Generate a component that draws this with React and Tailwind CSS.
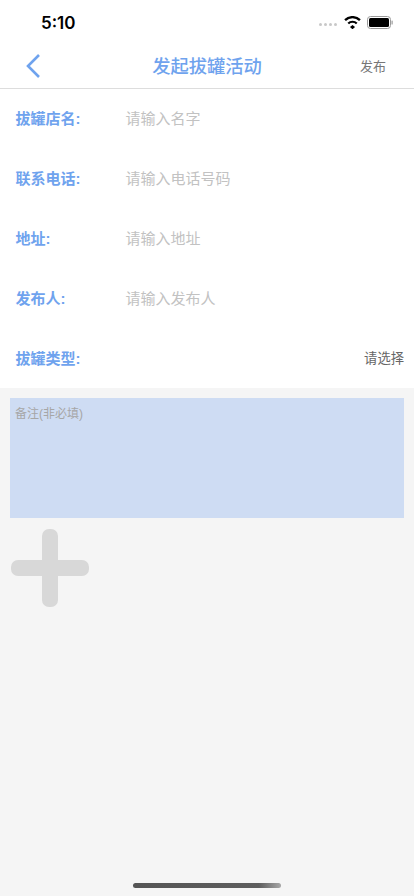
import React from 'react';

const FONT = "font-['Liberation_Sans','Noto_Sans_CJK_SC',sans-serif]";

const ROWS = [
    { label: "拔罐店名:", placeholder: "请输入名字" },
    { label: "联系电话:", placeholder: "请输入电话号码" },
    { label: "地址:", placeholder: "请输入地址" },
    { label: "发布人:", placeholder: "请输入发布人" },
];

const StatusBar = () => (
    <div className="h-[44px] flex items-center justify-between pl-[41px] pr-[21px] pt-[2px]">
        <span className="text-[17px] font-['Inter',sans-serif] font-semibold text-black leading-none">5:10</span>
        <div className="flex items-center">
            <div className="flex gap-[1.5px] mr-[7px] mt-[3px]">
                <span className="w-[3.5px] h-[3.5px] rounded-full bg-[#c8c8c8]"></span>
                <span className="w-[3.5px] h-[3.5px] rounded-full bg-[#c8c8c8]"></span>
                <span className="w-[3.5px] h-[3.5px] rounded-full bg-[#c8c8c8]"></span>
                <span className="w-[3.5px] h-[3.5px] rounded-full bg-[#c8c8c8]"></span>
            </div>
            <svg width="17" height="13" viewBox="0 0 16 12" className="mr-[6px] -mt-[2px]">
                <path d="M8 8.4 L10.4 10.2 L8 12.4 L5.6 10.2 Z" fill="#000" />
                <path d="M4 6.9 A5.8 5.8 0 0 1 12 6.9" stroke="#000" strokeWidth="2.1" fill="none" />
                <path d="M1 3.8 A10 10 0 0 1 15 3.8" stroke="#000" strokeWidth="2.2" fill="none" />
            </svg>
            <svg width="26" height="13" viewBox="0 0 26 13" className="-mt-[2px]">
                <rect x="0.5" y="0.5" width="23" height="12" rx="3" fill="none" stroke="#9a9a9a" />
                <rect x="2" y="2" width="20" height="9" rx="1.5" fill="#000" />
                <rect x="24.5" y="4.5" width="1.2" height="4" rx="0.6" fill="#9a9a9a" />
            </svg>
        </div>
    </div>
);

const NavBar = () => (
    <div className="h-[45px] flex items-center border-b border-[#dddddd]">
        <div className="flex-1">
            <svg width="16" height="26" viewBox="0 0 16 26" className="ml-[25px] mb-[1px]">
                <path d="M14 2 L3 13 L14 24" stroke="#6fa3ee" strokeWidth="2.6" fill="none" />
            </svg>
        </div>
        <h1 className="text-[18.3px] text-[#6fa3ee] font-medium pt-[1px]">发起拔罐活动</h1>
        <div className="flex-1 text-right">
            <span className="text-[13px] text-[#777777] mr-[28px]">发布</span>
        </div>
    </div>
);

const Row = ({ label, children }) => (
    <div className="h-[60px] flex items-center pl-[15.5px]">
        <span className="w-[110px] text-[15px] font-bold text-[#6fa3ee]">{label}</span>
        {children}
    </div>
);

const App = () => {
    return (
        <div className={`${FONT} w-[414px] h-[896px] bg-[#f5f5f5] flex flex-col overflow-hidden relative`}>
            <div className="bg-white h-[388px] overflow-hidden">
                <StatusBar />
                <NavBar />
                {ROWS.map(row => (
                    <Row key={row.label} label={row.label}>
                        <span className="text-[15px] text-[#c2c2c2]">{row.placeholder}</span>
                    </Row>
                ))}
                <Row label="拔罐类型:">
                    <span className="ml-auto mr-[10px] text-[13.3px] text-[#666666]">请选择</span>
                </Row>
            </div>

            <div className="mt-[10px] mx-[10px] h-[120px] bg-[#cedcf3] p-[5px]">
                <span className="block text-[12px] leading-[20px] text-[#a6a6a6] mt-[1px]">备注(非必填)</span>
            </div>

            <svg width="78" height="78" viewBox="0 0 78 78" className="mt-[11px] ml-[11px]">
                <rect x="31" y="0" width="16" height="78" rx="7" fill="#d8d8d8" />
                <rect x="0" y="31" width="78" height="16" rx="7" fill="#d8d8d8" />
            </svg>

            <div className="absolute left-[133px] bottom-[8px] w-[148px] h-[5px] rounded-full bg-gradient-to-r from-[#555555] via-[#5e5e5e] via-85% to-[#a8a8a8]"></div>
        </div>
    );
};

export default App;
